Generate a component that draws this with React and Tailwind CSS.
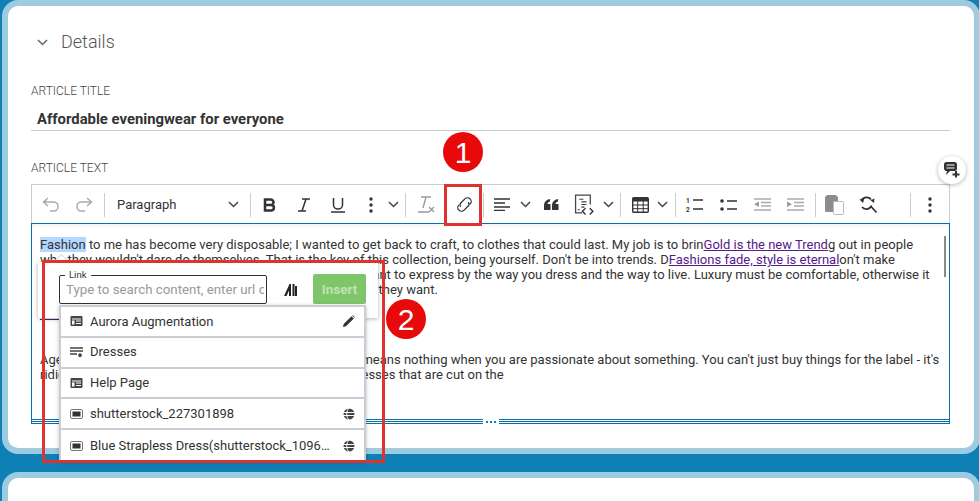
import React from "react";

const Chev = ({ c = "#444" }) => (
  <svg width="11" height="7" viewBox="0 0 11 7" className="shrink-0"><path d="M1 1l4.500 4.500L10 1" fill="none" stroke={c} strokeWidth="1.500" /></svg>
);
const Sep = () => <div className="w-px h-6 bg-[#ccc] shrink-0" />;
const Slot = ({ className = "", children }) => (
  <div className={"flex items-center justify-center shrink-0 h-full " + className}>{children}</div>
);
const Dots = () => (
  <svg width="4" height="16" viewBox="0 0 4 16"><circle cx="2" cy="2" r="1.700" fill="#333" /><circle cx="2" cy="8" r="1.700" fill="#333" /><circle cx="2" cy="14" r="1.700" fill="#333" /></svg>
);
const PageIcon = () => (
  <svg width="13" height="12" viewBox="0 0 13 12" className="shrink-0"><rect x="0.500" y="1" width="12" height="10" rx="1" fill="#444" /><rect x="2" y="3.500" width="9" height="1" fill="#fff" /><rect x="2" y="5.500" width="2.500" height="4" fill="#fff" /><rect x="6" y="5.500" width="5" height="1" fill="#fff" /><rect x="6" y="8" width="5" height="1" fill="#fff" /></svg>
);
const FolderIcon = () => (
  <svg width="13" height="12" viewBox="0 0 13 12" className="shrink-0"><path d="M0 2h13M0 5h13M0 8h7" stroke="#444" strokeWidth="1.300" /><path d="M10 7l2 1.500-.8 2.500H8.800L8 8.500z" fill="#444" /></svg>
);
const ImgIcon = () => (
  <svg width="13" height="10" viewBox="0 0 13 10" className="shrink-0"><rect x="0.500" y="0.500" width="12" height="9" rx="1.500" fill="#fff" stroke="#777" /><rect x="2.500" y="2.500" width="8" height="5" fill="#333" /></svg>
);
const Globe = () => (
  <svg width="12" height="12" viewBox="0 0 12 12" className="shrink-0"><circle cx="6" cy="6" r="5.500" fill="#444" /><path d="M0 4.500h12M0 7.500h12" stroke="#fff" strokeWidth="1" /><path d="M6 0C3 2.500 3 9.500 6 12" stroke="#fff" strokeWidth="1" fill="none" /></svg>
);
const Pencil = () => (
  <svg width="12" height="12" viewBox="0 0 12 12" className="shrink-0"><path d="M0 12l.7-3L8.500 1.200l2.300 2.300L3 11.300z" fill="#333" /><path d="M9.300.5l.5-.5 2.200 2.200-.5.5z" fill="#333" /></svg>
);

const Row = ({ icon, right, children }) => (
  <div className="h-[30.800px] flex items-center pl-[9px] pr-[9px] border-b-[2px] border-[#ccccd4] last:border-b-0 gap-[6px]">
    <div className="w-[13px] flex justify-center shrink-0">{icon}</div>
    <div className="flex-1 truncate text-[13px] text-[#333] pl-px pr-[6px]">{children}</div>
    {right}
  </div>
);

const L = ({ children }) => <a className="text-[#551a8b] underline">{children}</a>;

export default function App() {
  return (
    <div className="relative w-[979px] h-[501px] overflow-hidden bg-[#0e80b5] pl-[2px] font-['Roboto',sans-serif]">
      <div className="h-[454px] border-[6px] border-[#9dcbe0] bg-white rounded-2xl px-[23px] -mr-px">
        <div className="pt-[24px] h-[48px] flex items-center gap-[13px] pl-[6px]">
          <Chev c="#666" />
          <span className="text-[18px] text-[#555] font-light leading-6">Details</span>
        </div>
        <div className="mt-[31px] h-[12px] leading-3 text-[12px] font-light text-[#444]">ARTICLE TITLE</div>
        <div className="h-[34px] w-[919px] border-b border-[#ccc] pl-[6px] flex items-center text-[14.850px] font-bold text-[#333] pt-[11px]">Affordable eveningwear for everyone</div>
        <div className="mt-[31px] h-[12px] leading-3 text-[12px] font-light text-[#444]">ARTICLE TEXT</div>
        <div className="mt-[10px] w-[919px] h-[39px] border-t border-x border-[#ccc] flex items-center pt-px">
          <Slot className="w-[38px]"><svg width="18" height="16" viewBox="0 0 18 16"><path d="M6 1L1.500 5l4.500 4M1.500 5H12a4 4.500 0 0 1 0 9H8" fill="none" stroke="#aaa" strokeWidth="1.500" /></svg></Slot>
          <Slot className="w-[28px]"><svg width="18" height="16" viewBox="0 0 18 16"><path d="M12 1l4.500 4L12 9M16.500 5H6a4 4.500 0 0 0 0 9h4" fill="none" stroke="#aaa" strokeWidth="1.500" /></svg></Slot>
          <div className="w-[6px] shrink-0" /><Sep />
          <Slot className="w-[145px]">
            <div className="w-full flex items-center justify-between pl-[12px] pr-[11px]"><span className="text-[13px] text-[#333]">Paragraph</span><Chev /></div>
          </Slot>
          <Sep />
          <Slot className="w-[38px]"><svg width="14" height="14" viewBox="0 0 14 14"><path d="M2 1.500h5.500a3 2.700 0 0 1 0 5.500H2zM2 7h6.500a3 2.800 0 0 1 0 5.500H2z" fill="none" stroke="#333" strokeWidth="2.500" /></svg></Slot>
          <Slot className="w-[30px]"><svg width="12" height="14" viewBox="0 0 12 14"><path d="M4 1h8M0 13h8M8 1L4 13" fill="none" stroke="#333" strokeWidth="1.500" /></svg></Slot>
          <Slot className="w-[38px]"><svg width="14" height="16" viewBox="0 0 14 16"><path d="M2.500 1v7a4.500 4 0 0 0 9 0V1M0 15h14" fill="none" stroke="#333" strokeWidth="1.500" /></svg></Slot>
          <Slot className="w-[28px]"><Dots /></Slot>
          <Slot className="w-[16px]"><Chev /></Slot>
          <div className="w-[4px] shrink-0" /><Sep />
          <Slot className="w-[40px]"><svg width="18" height="17" viewBox="0 0 18 17"><path d="M4 1h10M9 1L6 12M1 16h11" fill="none" stroke="#999" strokeWidth="1.400" /><path d="M12 11l5 5M17 11l-5 5" stroke="#999" strokeWidth="1.400" /></svg></Slot>
          <Slot className="w-[36px]"><svg width="19" height="19" viewBox="-1 -1 18 18"><g fill="none" stroke="#333" strokeWidth="1.200" transform="rotate(-45 8 8)"><path d="M4 4.500A3.500 3.500 0 0 0 4 11.500H9.500A2.500 2.500 0 0 0 12 9" /><path d="M12 11.500A3.500 3.500 0 0 0 12 4.500H6.500A2.500 2.500 0 0 0 4 7" /></g></svg></Slot>
          <div className="w-px shrink-0" /><Sep />
          <Slot className="w-[36px]"><svg width="16" height="13" viewBox="0 0 16 13"><path d="M0 1h16M0 5h11M0 9h16M0 12.500h11" stroke="#333" strokeWidth="1.400" /></svg></Slot>
          <Slot className="w-[10px]"><Chev /></Slot>
          <Slot className="w-[42px]"><svg width="15" height="11" viewBox="0 0 15 11"><path d="M0 11V6.500C0 3 2 .8 6 0v2.500C4.200 3 3.500 3.800 3.500 5H6.500v6zM8 11V6.500C8 3 10 .8 14 0v2.500c-1.800.5-2.500 1.300-2.500 2.500h3v6z" fill="#333" /></svg></Slot>
          <Slot className="w-[24px]"><svg width="21" height="21" viewBox="0 0 20 20"><path d="M8 18H1.500V1h14v9" fill="none" stroke="#444" strokeWidth="1.200" /><path d="M5 5h4M7 7.500h5M7 10h5M7 12.500h3M3.500 15h2" stroke="#444" strokeWidth="1" /><path d="M11 13.500L8 16.500l3 3M15 13.500l3 3-3 3" fill="none" stroke="#333" strokeWidth="1.300" /></svg></Slot>
          <Slot className="w-[24px]"><Chev /></Slot>
          <Sep />
          <Slot className="w-[38px]"><svg width="17" height="16" viewBox="0 0 17 16"><rect x="0.700" y="0.700" width="15.600" height="14.600" rx="1" fill="#fff" stroke="#333" strokeWidth="1.400" /><rect x="1" y="1" width="15" height="3.500" fill="#333" /><path d="M1 8h15M1 11.700h15M5.700 4v11M11.200 4v11" stroke="#333" strokeWidth="1" /></svg></Slot>
          <Slot className="w-[6px]"><Chev /></Slot>
          <div className="w-[10px] shrink-0" /><Sep />
          <Slot className="w-[36px]"><svg width="17" height="15" viewBox="0 0 17 15"><path d="M7 3h10M7 12h10" stroke="#333" strokeWidth="1.400" /><text x="0" y="5.500" fontSize="6.500" fontWeight="700" fill="#333" fontFamily="Roboto">1</text><text x="0" y="14.500" fontSize="6.500" fontWeight="700" fill="#333" fontFamily="Roboto">2</text></svg></Slot>
          <Slot className="w-[32px]"><svg width="17" height="12" viewBox="0 0 17 12"><circle cx="2" cy="2" r="1.800" fill="#333" /><circle cx="2" cy="10" r="1.800" fill="#333" /><path d="M7 2h10M7 10h10" stroke="#333" strokeWidth="1.400" /></svg></Slot>
          <Slot className="w-[36px]"><svg width="17" height="13" viewBox="0 0 17 13"><path d="M0 1h17M7 4.500h10M7 8h10M0 12h17" stroke="#aaa" strokeWidth="1.300" /><path d="M0 6.300L5 3.500v5.600z" fill="#999" /></svg></Slot>
          <Slot className="w-[30px]"><svg width="17" height="13" viewBox="0 0 17 13"><path d="M0 1h17M7 4.500h10M7 8h10M0 12h17" stroke="#aaa" strokeWidth="1.300" /><path d="M5 6.300L0 3.500v5.600z" fill="#999" /></svg></Slot>
          <div className="w-[5px] shrink-0" /><Sep />
          <Slot className="w-[36px]"><svg width="19" height="20" viewBox="0 0 19 20"><rect x="0" y="1" width="13" height="16" rx="1.500" fill="#8c8c8c" /><rect x="1.500" y="0" width="10" height="3" rx="1" fill="#8c8c8c" /><rect x="8.500" y="6.500" width="10" height="13" rx="1" fill="#fff" stroke="#bbb" /></svg></Slot>
          <Slot className="w-[32px]"><svg width="19" height="18" viewBox="0 0 18 18"><path d="M11.500 3.500A5.500 5.500 0 0 0 2 5M2.500 11A5.500 5.500 0 0 0 12 9.500M11.500 10.500L17 16.500" fill="none" stroke="#333" strokeWidth="1.800" /><path d="M0 3.500l3.500 3.500L5 2zM14.500 7L11 4.300l4-1.800z" fill="#333" /></svg></Slot>
          <div className="w-[26px] shrink-0" /><Sep />
          <Slot className="w-[38px]"><Dots /></Slot>
        </div>
        <div className="w-[919px] h-[196px] border border-[#0a6ea8] border-b-0 relative shadow-[inset_0_2px_3px_rgba(0,0,0,0.05)] px-[8px] pt-[13px] text-[13px] leading-[15px] text-[#333] whitespace-nowrap overflow-hidden">
          <div><span className="bg-[#b4d7ff]">Fashion</span> to me has become very disposable; I wanted to get back to craft, to clothes that could last. My job is to brin<L>Gold is the new Trend</L>g out in people</div>
          <div>who they wouldn't dare do themselves. That is the key of this collection, being yourself. Don't be into trends. D<L>Fashions fade, style is eternal</L>on't make</div>
          <div>fashion own you, but you decide what you are, what you want to express by the way you dress and the way to live. Luxury must be comfortable, otherwise it</div>
          <div>is not luxury. I don't design clothes, I design dreams. Do as they want.</div>
          <div className="h-[9px]" />
          <div className="text-[#551a8b] underline">Read more</div>
          <div className="h-[31px]" />
          <div><span className="mr-[7px]">Age is something that doesn't matter at all. Really, age</span> means nothing when you are passionate about something. You can't just buy things for the label - it's</div>
          <div>ridiculous. I make clothes people like to wear, and the dresses that are cut on the</div>
          <div className="absolute right-[3px] top-[12px] w-[2px] h-[41px] bg-[#888]" />
        </div>
        <div className="w-[919px] h-[5px] border-y border-x border-[#0a6ea8] relative flex items-center">
          <div className="h-px w-full bg-[#0a6ea8]" />
          <div className="absolute left-[451px] -top-px w-[16px] h-[5px] bg-white flex items-center justify-center"><div className="w-[10px] h-[2px] border-b-2 border-dotted border-[#0e80b5]" /></div>
        </div>
      </div>
      <div className="h-[40px] mt-[18px] border-[6px] border-b-0 border-[#9dcbe0] bg-white rounded-t-2xl -mr-px" />

      {/* comment button */}
      <div className="absolute left-[938px] top-[156px] w-[28px] h-[28px] rounded-full bg-white shadow-[0_1px_4px_rgba(0,0,0,0.3)] flex items-center justify-center">
        <svg width="16" height="16" viewBox="0 0 16 16"><path d="M2.500 0h8A2.500 2.500 0 0 1 13 2.500v4A2.500 2.500 0 0 1 10.500 9H6l-4 4 1-4.100A2.500 2.500 0 0 1 0 6.500v-4A2.500 2.500 0 0 1 2.500 0z" fill="#333" /><path d="M2.500 3h8M2.500 6h8" stroke="#fff" strokeWidth="1" /><path d="M12 9v6.500M8.500 12.500h7" stroke="#333" strokeWidth="2" /></svg>
      </div>

      {/* link popover */}
      <div className="absolute left-[38px] top-[262px] w-[340px] h-[56px] bg-white shadow-[0_1px_4px_rgba(0,0,0,0.3)]">
        <div className="absolute left-[18px] -top-[6px] w-[11px] h-[11px] rotate-45 bg-white border-l border-t border-[#ddd]" />
        <div className="relative flex items-start pl-[21px] pt-[13px]">
          <div className="relative w-[208px] h-[29px] border border-[#333] rounded-[2px] flex items-center pl-[6px]">
            <span className="block w-[198px] overflow-hidden text-[13.300px] text-[#999] whitespace-nowrap">Type to search content, enter url or</span>
          </div>
          <span className="absolute left-[27px] top-[8px] px-[4px] bg-white text-[9.500px] leading-[10px] text-[#333]">Link</span>
          <div className="w-[46px] h-[29px] flex items-center justify-center">
            <svg width="13" height="12" viewBox="0 0 13 12"><path d="M0 12L5.500 0H7v12H5V6.500L2.500 12z" fill="#222" /><rect x="8.500" y="0" width="2" height="12" fill="#222" /><rect x="11" y="2" width="2" height="10" fill="#222" /></svg>
          </div>
          <div className="w-[53px] h-[30px] -mt-px bg-[#7fc66a] rounded-[2px] flex items-center justify-center text-[13.500px] font-bold text-[#bfe3b4]">Insert</div>
        </div>
      </div>

      {/* suggestion list */}
      <div className="absolute left-[59px] top-[305px] w-[307px] h-[156px] bg-white border-x-[2px] border-t-[2px] border-[#ccccd4] shadow-[0_1px_4px_rgba(0,0,0,0.25)]">
        <Row icon={<PageIcon />} right={<Pencil />}>Aurora Augmentation</Row>
        <Row icon={<FolderIcon />}>Dresses</Row>
        <Row icon={<PageIcon />}>Help Page</Row>
        <Row icon={<ImgIcon />} right={<Globe />}>shutterstock_227301898</Row>
        <Row icon={<ImgIcon />} right={<Globe />}>Blue Strapless Dress(shutterstock_1096000000)</Row>
      </div>

      {/* annotations */}
      <div className="absolute left-[444px] top-[184px] w-[38px] h-[42px] border-[3px] border-[#e0332e]" />
      <div className="absolute left-[42px] top-[260px] w-[343px] h-[203px] border-[3px] border-[#e0332e]" />
      <div className="absolute left-[443px] top-[132px] w-[40px] h-[40px] rounded-full bg-[#e80a0a] flex items-center justify-center text-white text-[30px] font-['Liberation_Sans',sans-serif]">1</div>
      <div className="absolute left-[386px] top-[299px] w-[40px] h-[40px] rounded-full bg-[#e80a0a] flex items-center justify-center text-white text-[30px] font-['Liberation_Sans',sans-serif]">2</div>
    </div>
  );
}
